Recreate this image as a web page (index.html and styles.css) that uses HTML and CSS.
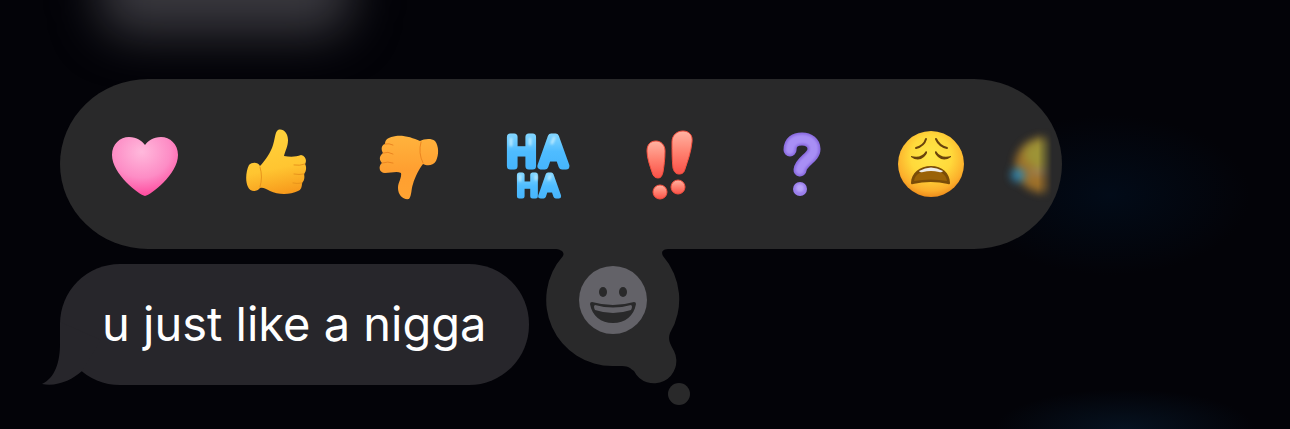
FILE: index.html
```
<!DOCTYPE html>
<html lang="en">
<head>
    <meta charset="UTF-8">
    <meta name="viewport" content="width=device-width, initial-scale=1.0">
    <title>Messages</title>
    <link rel="stylesheet" href="styles.css">
</head>
<body>

    <main class="chat">
        <div class="reactions">
            <div class="reactions-track">
                <button type="button" class="reaction" aria-label="Love">
                    <svg viewBox="0 0 72 72">
                        <defs>
                            <radialGradient id="heart" cx="0.45" cy="0.25" r="0.8">
                                <stop offset="0" stop-color="#ffb9dc"/>
                                <stop offset="0.55" stop-color="#fd8cc5"/>
                                <stop offset="1" stop-color="#ff3f97"/>
                            </radialGradient>
                        </defs>
                        <path fill="url(#heart)" d="M36 68C30 67 3 46 3 27C3 16 11 9 20 9C28 9 33 13 36 17C39 13 44 9 52 9C61 9 69 16 69 27C69 46 42 67 36 68Z"/>
                    </svg>
                </button>
                <button type="button" class="reaction" aria-label="Like">
                    <svg viewBox="0 0 72 72">
                        <defs>
                            <linearGradient id="thumbUp" x1="0.4" y1="0" x2="0.6" y2="1">
                                <stop offset="0" stop-color="#ffd23c"/>
                                <stop offset="0.6" stop-color="#ffc531"/>
                                <stop offset="1" stop-color="#f79a1c"/>
                            </linearGradient>
                        </defs>
                        <path fill="url(#thumbUp)" d="M20 38C25 33 31 24 33 17C35 11 35 4 38 2C43 0 48 5 48 12C48 19 45 23 44 28C50 29 56 29 61 27C66 28 67 33 65 36C67 39 66 44 64 46C65 50 64 53 62 55C62 59 61 62 58 63C50 67 38 67 30 63C26 61 23 59 20 60C17 64 10 64 8 59C5 53 6 43 9 37C12 34 18 34 20 38Z"/>
                        <path class="crease" stroke="#e8941b" d="M65 36Q60 38 54 37M64 46Q59 47 54 46M62 55Q57 56 53 55M20 39Q23 49 20 59"/>
                    </svg>
                </button>
                <button type="button" class="reaction" aria-label="Dislike">
                    <svg viewBox="0 0 72 72">
                        <defs>
                            <linearGradient id="thumbDown" x1="0.5" y1="0" x2="0.5" y2="1">
                                <stop offset="0" stop-color="#ffb33d"/>
                                <stop offset="0.55" stop-color="#ff9f30"/>
                                <stop offset="1" stop-color="#ffa332"/>
                            </linearGradient>
                        </defs>
                        <path fill="url(#thumbDown)" d="M49 13C42 10 33 7 25 8C18 9 14 11 14 16C10 17 10 22 12 25C8 28 8 32 11 35C7 38 8 45 14 45C20 45 26 43 30 45C31 50 27 54 27 60C27 67 32 72 38 71C41 67 40 61 42 56C44 49 48 41 52 36C56 38 62 38 65 33C68 27 68 18 64 13C60 10 53 11 49 13Z"/>
                        <path class="crease" stroke="#ec8520" d="M14 16Q18 15 22 17M12 25Q17 23 22 26M11 35Q17 33 22 35M50 14Q47 25 52 35"/>
                    </svg>
                </button>
                <button type="button" class="reaction" aria-label="Haha">
                    <svg viewBox="0 0 72 72">
                        <defs>
                            <linearGradient id="haha" x1="0" y1="0" x2="0" y2="1">
                                <stop offset="0.1" stop-color="#86d8ff"/>
                                <stop offset="0.5" stop-color="#4fbcff"/>
                                <stop offset="0.9" stop-color="#45b4fc"/>
                            </linearGradient>
                        </defs>
                        <g fill="url(#haha)" stroke="url(#haha)" stroke-linejoin="round">
                            <text class="haha-text haha-large" x="5 38" y="38">HA</text>
                            <text class="haha-text haha-small" x="15 38" y="68">HA</text>
                        </g>
                        <g class="shine" stroke="#b5e8ff">
                            <path d="M9 11V17M28 11V16M52 10L50 15M18 48V52M34 48V51M48 48L47 51"/>
                        </g>
                    </svg>
                </button>
                <button type="button" class="reaction" aria-label="Emphasize">
                    <svg viewBox="0 0 72 72">
                        <defs>
                            <linearGradient id="bang" x1="0" y1="0" x2="0" y2="1">
                                <stop offset="0" stop-color="#ffb3a2"/>
                                <stop offset="0.5" stop-color="#ff8170"/>
                                <stop offset="1" stop-color="#fb5148"/>
                            </linearGradient>
                        </defs>
                        <g fill="url(#bang)" stroke="#f5503f">
                            <path d="M23 13C28 13 32 17 32 23C32 31 31 38 30 44C29 48 28 50 25 50C22 50 20 48 19 44C17 38 14 30 14 23C14 17 17 13 23 13Z"/>
                            <path d="M50 3C56 3 60 7 59 14C58 24 55 32 52 41C51 45 49 46 46 46C43 46 41 44 40 40C39 32 39 23 39 14C39 7 44 3 50 3Z"/>
                            <circle cx="27" cy="64" r="7"/>
                            <circle cx="45" cy="59" r="7"/>
                        </g>
                    </svg>
                </button>
                <button type="button" class="reaction" aria-label="Question">
                    <svg viewBox="0 0 72 72">
                        <g fill="none" stroke-linecap="round">
                            <path stroke="#8a6be0" stroke-width="13" d="M26 22C26 14 31 11 38 11C45 11 50 15 50 21C50 30 37 33 36 42"/>
                            <path class="glow" stroke="#a88ff5" stroke-width="9" d="M26 22C26 14 31 11 38 11C45 11 50 15 50 21C50 30 37 33 36 42"/>
                        </g>
                        <circle cx="36" cy="61" r="7" fill="#9a7eec"/>
                        <circle class="glow" cx="36" cy="60" r="4" fill="#b8a4f8"/>
                    </svg>
                </button>
                <button type="button" class="reaction" aria-label="Weary face">
                    <svg viewBox="0 0 72 72">
                        <defs>
                            <radialGradient id="face" cx="0.5" cy="0.38" r="0.62">
                                <stop offset="0" stop-color="#ffe647"/>
                                <stop offset="0.5" stop-color="#ffd93b"/>
                                <stop offset="0.85" stop-color="#fcae2b"/>
                                <stop offset="1" stop-color="#ee8d1c"/>
                            </radialGradient>
                        </defs>
                        <circle cx="36" cy="36" r="33" fill="url(#face)"/>
                        <g fill="none" stroke="#6a430c" stroke-width="2" stroke-linecap="round">
                            <path d="M21 20Q29 18 31 11M41 11Q44 18 52 20"/>
                        </g>
                        <path fill="#6a430c" d="M16 28Q26 31 31 23Q34 24 29 29Q23 34 16 29ZM56 28Q46 31 41 23Q38 24 43 29Q49 34 56 29Z"/>
                        <path fill="#7a4c08" d="M16 55C16 45 25 38 36 38C47 38 55 45 55 55Q55 57 53 56Q36 52 18 56Q16 57 16 55Z"/>
                        <path fill="#9a6207" d="M19 53C20 46 27 42 36 42C45 42 51 46 52 53Q36 50 19 53Z"/>
                        <path fill="#eceae6" d="M24 43Q36 36 48 43Q47 45 44 44Q36 42 28 44Q25 45 24 43Z"/>
                    </svg>
                </button>
                <button type="button" class="reaction reaction-fading" aria-label="Tears of joy">
                    <svg viewBox="0 0 72 72">
                        <ellipse cx="26" cy="37" rx="29" ry="28" fill="#d0902a"/>
                        <ellipse cx="26" cy="26" rx="20" ry="15" fill="#cfc03c"/>
                        <path fill="#c9b090" d="M12 42H60V46H12Z"/>
                        <circle cx="0" cy="47" r="7" fill="#35a9e0"/>
                    </svg>
                </button>
            </div>
        </div>

        <div class="message-row">
            <div class="bubble">
                <svg class="bubble-tail" viewBox="41 322 60 63">
                    <path d="M59 322V344C59 362 54 378 41 384C56 387 71 380 81 371L100 340Z"/>
                </svg>
                u just like a nigga
            </div>
            <button type="button" class="emoji-button" aria-label="Choose emoji">
                <svg viewBox="545 249 144 157">
                    <path fill="#29292a" d="M552 248V249C559 249 563 252 561 256A66 66 0 0 0 611 366H620C627 366 629 369 632 371A22 22 0 0 0 672 351C670 346 665 341 668 333A66 66 0 0 0 661 256C659 252 660 249 668 249V248Z"/>
                    <circle fill="#29292a" cx="677" cy="394" r="11"/>
                    <circle fill="#636268" cx="611" cy="300" r="34"/>
                    <ellipse fill="#29292a" cx="601" cy="292" rx="4" ry="5"/>
                    <ellipse fill="#29292a" cx="621" cy="292" rx="4" ry="5"/>
                    <path fill="#29292a" d="M590 302Q611 308 632 302Q634 302 634 304C632 316 623 323 611 323C599 323 590 316 588 304Q588 302 590 302Z"/>
                    <path fill="#636268" d="M593 305Q611 310 629 305Q631 306 629 310Q611 316 593 310Q591 306 593 305Z"/>
                </svg>
            </button>
        </div>
    </main>

</body>
</html>
```
FILE: styles.css
```
body {
    margin: 0;
    min-height: 100vh;
    position: relative;
    overflow: hidden;
    font-family: Inter, "Liberation Sans", sans-serif;
    color: #ffffff;
    background:
        radial-gradient(ellipse 140px 80px at 1110px 195px, #020b18, transparent),
        radial-gradient(ellipse 130px 40px at 1125px 100%, #061220, transparent),
        #030308;
}
/* blurred message behind the menu */
body::before {
    content: "";
    position: absolute;
    top: -60px;
    left: 100px;
    width: 250px;
    height: 94px;
    background: #39383e;
    border-radius: 30px;
    filter: blur(24px);
}
button {
    padding: 0;
    border: none;
    background: none;
    cursor: pointer;
}
svg {
    display: block;
    overflow: visible;
}
.chat {
    position: relative;
    padding: 79px 228px 0 60px;
}
.reactions {
    padding: 41px 10px 41px 49px;
    background: #29292a;
    border-radius: 88px / 50%;
}
.reactions-track {
    display: flex;
    gap: 59px;
    padding: 8px 0;
    overflow: hidden;
    -webkit-mask-image: linear-gradient(to left, transparent, #000 14px);
    mask-image: linear-gradient(to left, transparent, #000 14px);
}
.reaction {
    flex: none;
    width: 72px;
    height: 72px;
}
.reaction-fading {
    margin-left: -8px;
    filter: blur(4px);
    opacity: 0.7;
}
.crease {
    fill: none;
    stroke-width: 1;
    stroke-linecap: round;
}
.haha-text {
    font-family: Inter, "Liberation Sans", sans-serif;
    font-weight: 400;
}
.haha-large {
    font-size: 39px;
    stroke-width: 7px;
}
.haha-small {
    font-size: 28px;
    stroke-width: 5px;
}
.shine {
    fill: none;
    stroke-width: 3;
    stroke-linecap: round;
    filter: blur(1px);
}
.glow {
    filter: blur(1px);
}
.message-row {
    display: flex;
    align-items: flex-start;
    gap: 18px;
}
.bubble {
    position: relative;
    margin-top: 15px;
    padding: 30px 42px 31px;
    border-radius: 60px;
    background: #27262b;
    font-size: 47px;
    line-height: 60px;
    white-space: nowrap;
}
.bubble-tail {
    position: absolute;
    left: -18px;
    bottom: 0;
    width: 60px;
    height: 63px;
    fill: #27262b;
}
.emoji-button svg {
    width: 144px;
    height: 157px;
}
```
